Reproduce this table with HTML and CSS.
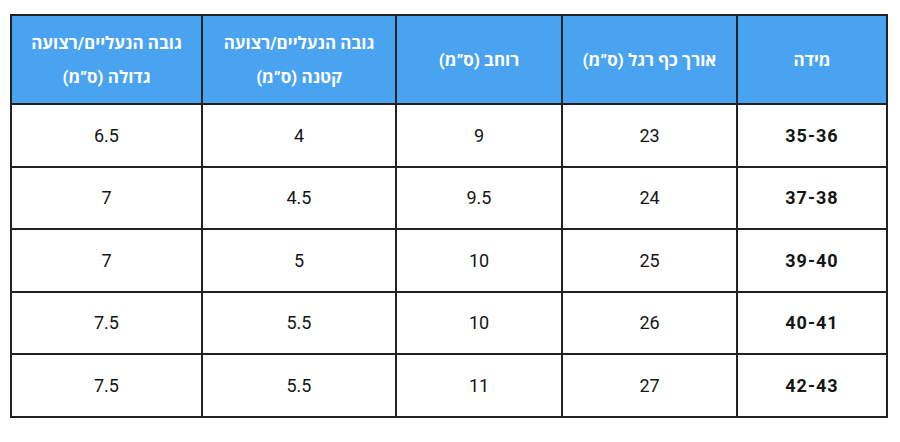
FILE: index.html
```html
<!DOCTYPE html>
<html lang="he" dir="rtl">
<head>
<meta charset="utf-8">
<link rel="stylesheet" href="styles.css">
</head>
<body>
<div class="wrap">
<table class="sizes">
  <colgroup>
    <col class="c-size">
    <col class="c-len">
    <col class="c-wid">
    <col class="c-small">
    <col class="c-big">
  </colgroup>
  <thead>
    <tr>
      <th>מידה</th>
      <th>אורך כף רגל (ס”מ)</th>
      <th>רוחב (ס”מ)</th>
      <th>גובה הנעליים/רצועה<br>קטנה (ס”מ)</th>
      <th>גובה הנעליים/רצועה<br>גדולה (ס”מ)</th>
    </tr>
  </thead>
  <tbody>
    <tr><td class="size">35-36</td><td>23</td><td>9</td><td>4</td><td>6.5</td></tr>
    <tr><td class="size">37-38</td><td>24</td><td>9.5</td><td>4.5</td><td>7</td></tr>
    <tr><td class="size">39-40</td><td>25</td><td>10</td><td>5</td><td>7</td></tr>
    <tr><td class="size">40-41</td><td>26</td><td>10</td><td>5.5</td><td>7.5</td></tr>
    <tr><td class="size">42-43</td><td>27</td><td>11</td><td>5.5</td><td>7.5</td></tr>
  </tbody>
</table>
</div>
</body>
</html>
```
FILE: styles.css
```css
html, body {
  margin: 0;
  padding: 0;
  background: #ffffff;
}
.wrap {
  padding: 14px 12px 0 12px;
}
.sizes {
  border-collapse: collapse;
  table-layout: fixed;
  width: 876px;
  font-family: Roboto, "Open Sans", "DejaVu Sans", sans-serif;
  color: #151515;
}
.c-size { width: 150px; }
.c-len { width: 175px; }
.c-wid { width: 166px; }
.c-small { width: 194px; }
.c-big { width: 191px; }
.sizes th,
.sizes td {
  border: 2px solid #222222;
  text-align: center;
  vertical-align: middle;
  padding: 0 6px;
}
.sizes th {
  background: #4aa3f1;
  color: #ffffff;
  font-weight: 700;
  font-size: 17px;
  line-height: 34px;
  height: 87px;
}
.sizes td {
  height: 60.5px;
  font-size: 18px;
  font-weight: 400;
}
.sizes td.size {
  font-weight: 700;
  letter-spacing: 1px;
}
```
